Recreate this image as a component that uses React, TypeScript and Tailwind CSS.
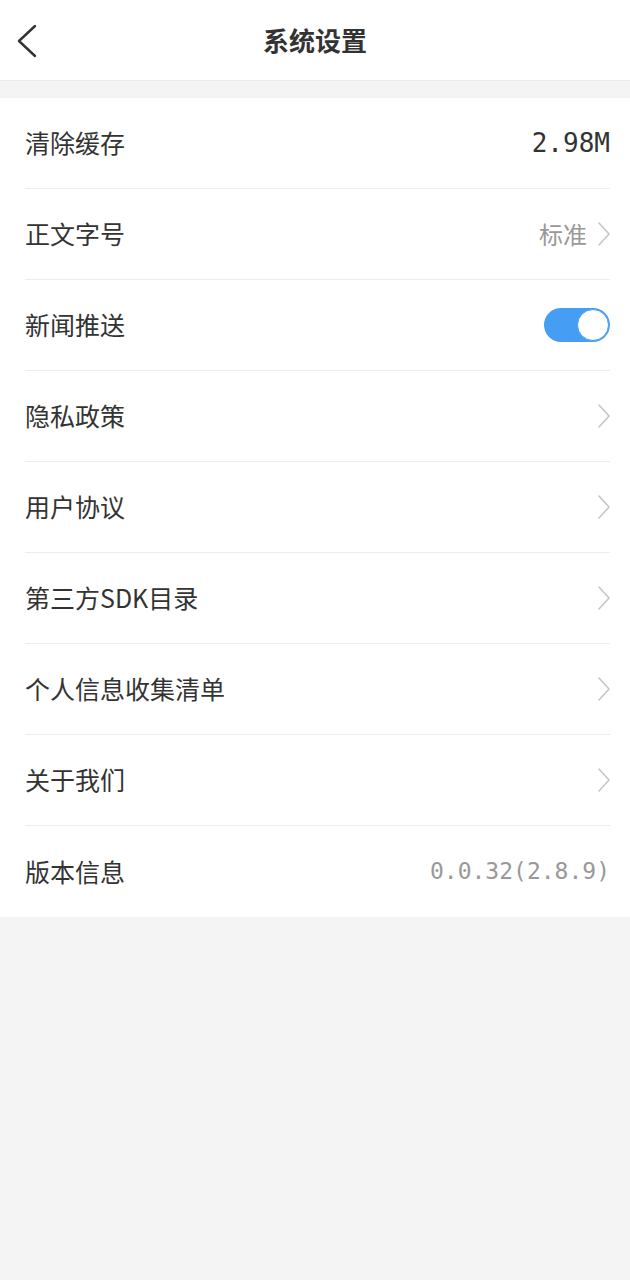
const rows: { label: string; value?: string; kind: "mono" | "link" | "toggle" | "version" }[] = [
  { label: "清除缓存", value: "2.98M", kind: "mono" },
  { label: "正文字号", value: "标准", kind: "link" },
  { label: "新闻推送", kind: "toggle" },
  { label: "隐私政策", kind: "link" },
  { label: "用户协议", kind: "link" },
  { label: "第三方SDK目录", kind: "link" },
  { label: "个人信息收集清单", kind: "link" },
  { label: "关于我们", kind: "link" },
  { label: "版本信息", value: "0.0.32(2.8.9)", kind: "version" },
];

const cjk = "font-['Noto_Sans_CJK_SC','Noto_Sans',sans-serif]";
const mono = "font-['DejaVu_Sans_Mono','Liberation_Mono',monospace]";

function Chevron() {
  return (
    <svg width="14" height="26" viewBox="0 0 14 26" fill="none">
      <path d="M2 2 L12 13 L2 24" stroke="#c6c6c6" strokeWidth="1.6" strokeLinecap="round" strokeLinejoin="round" />
    </svg>
  );
}

export default function App() {
  return (
    <div className={`min-h-[1280px] w-[630px] bg-[#f4f4f4] ${cjk}`}>
      {/* header */}
      <div className="relative h-[81px] bg-white border-b border-[#ececec] flex items-center justify-center">
        <svg className="absolute left-[15px] top-[24px]" width="24" height="34" viewBox="0 0 24 34" fill="none">
          <path d="M20 2 L4 17 L20 32" stroke="#333" strokeWidth="2.4" strokeLinecap="round" strokeLinejoin="round" />
        </svg>
        <h1 className="text-[26px] font-bold text-[#333] leading-none">系统设置</h1>
      </div>

      <div className="mt-[17px] bg-white pl-[25px] pr-[20px]">
        {rows.map((r, i) => (
          <div
            key={r.label}
            className={`h-[91px] flex items-center justify-between ${i < rows.length - 1 ? "border-b border-[#ededed]" : ""}`}
          >
            <span className="text-[25px] text-[#333]">{r.label}</span>
            {r.kind === "mono" && (
              <span className={`${mono} text-[26px] text-[#333]`}>{r.value}</span>
            )}
            {r.kind === "version" && (
              <span className={`${mono} text-[23px] text-[#999]`}>{r.value}</span>
            )}
            {r.kind === "link" && (
              <div className="flex items-center gap-[10px]">
                {r.value && <span className="text-[24px] text-[#999]">{r.value}</span>}
                <div className="-mr-[1px]">
                  <Chevron />
                </div>
              </div>
            )}
            {r.kind === "toggle" && (
              <div className="w-[66px] h-[34px] rounded-full bg-[#459ef3] flex items-center justify-end pr-[1px]">
                <div className="w-[32px] h-[32px] rounded-full bg-white border border-[#459ef3]" />
              </div>
            )}
          </div>
        ))}
      </div>
    </div>
  );
}
